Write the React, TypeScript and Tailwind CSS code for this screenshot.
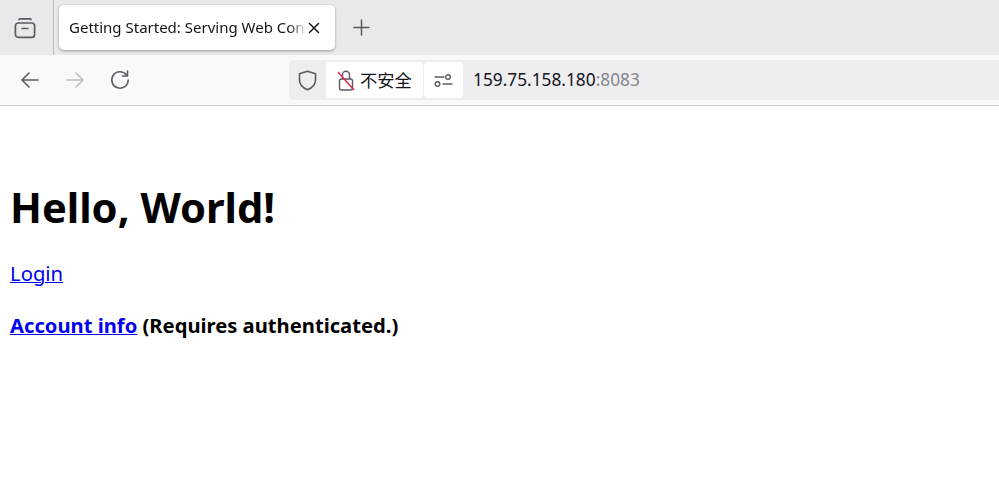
const sans = "font-['Noto_Sans','Open_Sans',sans-serif]";

const TabsIcon = () => (
  <svg width="22" height="22" viewBox="0 0 22 22" fill="none" stroke="#5b5b66" strokeWidth="1.7">
    <path d="M5 2.6c0-.5.3-.8.8-.8h10.4c.5 0 .8.3.8.8" strokeLinecap="round" />
    <rect x="1.4" y="6" width="19.2" height="14.4" rx="3" />
    <path d="M8.2 11.5h5.6" strokeLinecap="round" />
  </svg>
);

const ArrowIcon = ({ flip, color }: { flip?: boolean; color: string }) => (
  <svg width="20" height="20" viewBox="0 0 20 20" fill="none" stroke={color} strokeWidth="1.6" strokeLinecap="round" strokeLinejoin="round" className={flip ? "-scale-x-100" : ""}>
    <path d="M2 10h16M9 3l-7 7 7 7" />
  </svg>
);

const App = () => {
  return (
    <div className={`flex h-[496px] w-[999px] flex-col overflow-hidden bg-white ${sans}`}>
      <div className="flex h-[55px] shrink-0 bg-[#e9e9eb]">
        <div className="flex h-[55px] w-[54px] shrink-0 items-center justify-center border-r border-[#b9b9bd] pr-[3px]">
          <TabsIcon />
        </div>
        <div className="ml-[5px] mt-[5px] flex h-[45px] w-[276px] items-center rounded-[5px] bg-white pl-[10px] pr-[13px] shadow-[0_1px_3px_rgba(0,0,0,0.35)]">
          <div className="mb-[2px] w-[238px] overflow-hidden whitespace-nowrap text-[15px] leading-[22px] text-[#15141a] [mask-image:linear-gradient(to_right,black_220px,transparent_238px)]">
            Getting Started: Serving Web Content
          </div>
          <svg width="12" height="12" viewBox="0 0 12 12" fill="none" stroke="#15141a" strokeWidth="1.5" strokeLinecap="round" className="ml-[1px]">
            <path d="M1.5 1.5l9 9M10.5 1.5l-9 9" />
          </svg>
        </div>
        <div className="ml-[18px] flex items-center">
          <svg width="17" height="17" viewBox="0 0 17 17" fill="none" stroke="#5b5b66" strokeWidth="1.5" strokeLinecap="round">
            <path d="M8.5 1v15M1 8.5h15" />
          </svg>
        </div>
      </div>

      <div className="flex h-[51px] shrink-0 items-center border-b border-[#ccccd0] bg-[#f9f9fb]">
        <div className="flex w-[289px] shrink-0 items-center pl-[20px]">
          <ArrowIcon color="#5b5b66" />
          <div className="ml-[25px]">
            <ArrowIcon flip color="#bdbdc2" />
          </div>
          <svg width="20" height="20" viewBox="0 0 20 20" fill="none" stroke="#5b5b66" strokeWidth="1.6" strokeLinecap="round" strokeLinejoin="round" className="ml-[25px]">
            <path d="M16.5 5A8.2 8.2 0 1 0 18.2 10" />
            <path d="M17.5 1v5h-5" />
          </svg>
        </div>
        <div className="flex h-[40px] flex-1 items-center rounded-l-[6px] bg-[#eeeef0] text-[#15141a]">
          <div className="flex w-[37px] shrink-0 justify-center">
            <svg width="19" height="21" viewBox="0 0 19 21" fill="none" stroke="#5b5b66" strokeWidth="1.6" strokeLinejoin="round">
              <path d="M9.5 1.2l8 2.6v6.2c0 4.6-3.6 8-8 9.8-4.4-1.8-8-5.2-8-9.8V3.8z" />
            </svg>
          </div>
          <div className="flex h-[36px] w-[97px] shrink-0 items-center rounded-[4px] bg-white pl-[11px]">
            <svg width="18" height="21" viewBox="0 0 18 21" fill="none" className="shrink-0">
              <path d="M5.5 9V4.8a3.5 3.5 0 0 1 7 0V9" stroke="#5b5b66" strokeWidth="1.4" />
              <rect x="2.5" y="9" width="13" height="11" rx="2" stroke="#5b5b66" strokeWidth="1.4" />
              <path d="M1 2l16 18" stroke="#e22850" strokeWidth="1.5" />
            </svg>
            <span className="ml-[5px] whitespace-nowrap font-['Noto_Sans_CJK_SC',sans-serif] text-[17.3px] leading-none">不安全</span>
          </div>
          <div className="ml-[1px] flex h-[36px] w-[39px] shrink-0 items-center justify-center rounded-[4px] bg-white">
            <svg width="19" height="13" viewBox="0 0 19 13" fill="none" stroke="#5b5b66" strokeWidth="1.4" strokeLinecap="round">
              <circle cx="14" cy="3" r="2.3" />
              <path d="M1 3h9" />
              <circle cx="3.5" cy="10" r="2.3" />
              <path d="M9 10h9" />
            </svg>
          </div>
          <div className="ml-[10px] whitespace-nowrap text-[17.3px] leading-none">
            159.75.158.180<span className="text-[#85858b]">:8083</span>
          </div>
        </div>
      </div>

      <main className="text-black">
        <h1 className="ml-[10px] mt-[74px] text-[41.7px] font-bold leading-[54px]">Hello, World!</h1>
        <p className="ml-[10px] mt-[25px] text-[20.3px] leading-[28px]">
          <a href="#" className="text-[#0000ee] underline decoration-1">Login</a>
        </p>
        <p className="ml-[10px] mt-[24px] text-[20.2px] font-bold leading-[28px]">
          <a href="#" className="text-[#0000ee] underline decoration-1">Account info</a> (Requires authenticated.)
        </p>
      </main>
    </div>
  );
};

export default App;
